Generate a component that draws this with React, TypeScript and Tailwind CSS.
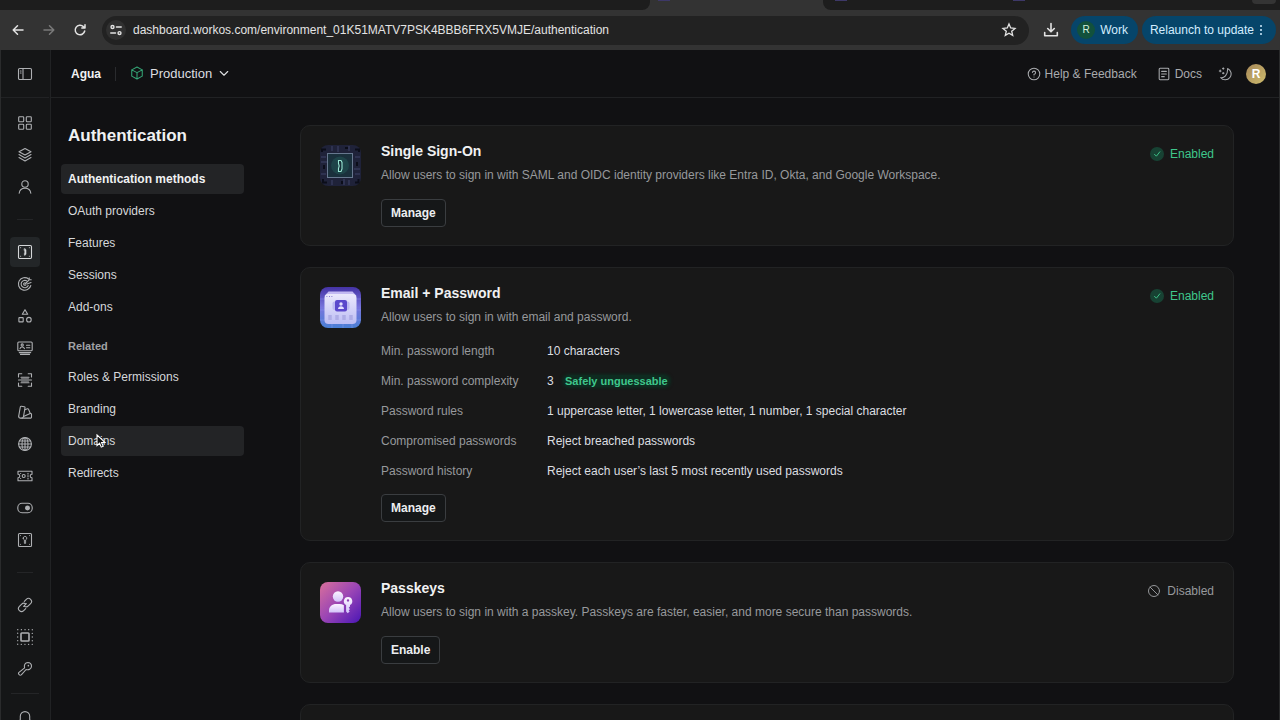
import type { ReactNode } from 'react'
import { clsx } from 'clsx'

function Glyph({ children, className = 'size-4', width = 1.1 }: { children: ReactNode; className?: string; width?: number }) {
  return (
    <svg viewBox="0 0 16 16" fill="none" stroke="currentColor" strokeWidth={width} strokeLinecap="round" strokeLinejoin="round" className={clsx('shrink-0', className)} aria-hidden="true">
      {children}
    </svg>
  )
}

const icons = {
  panel: <><rect x="1.5" y="2.5" width="13" height="11" rx="1.2" /><path d="M6 2.5v11M3.3 5h.8M3.3 7h.8" /></>,
  grid: <><rect x="1.7" y="1.7" width="5" height="5" rx=".8" /><rect x="9.3" y="1.7" width="5" height="5" rx=".8" /><rect x="1.7" y="9.3" width="5" height="5" rx=".8" /><rect x="9.3" y="9.3" width="5" height="5" rx=".8" /></>,
  layers: <><path d="M8 1.5 14 4.8 8 8 2 4.8Z" /><path d="m2 7.6 6 3.3 6-3.3M2 10.6l6 3.3 6-3.3" /></>,
  user: <><circle cx="8" cy="5" r="3.2" /><path d="M2.2 14.3c.4-3.3 2.7-5 5.8-5s5.4 1.7 5.8 5" /></>,
  auth: <><rect x="1.5" y="1.5" width="13" height="13" rx="1.2" /><path d="M7.4 4.8h.8l.8 1.2v4l-.8 1.2h-.8V9.3L8 8l-.6-1.3Z" fill="currentColor" strokeWidth=".6" /><path d="M3.6 3.7h.1M12.3 3.7h.1M3.6 12.3h.1M12.3 12.3h.1" strokeWidth=".9" /></>,
  radar: <><path d="M13.8 9.5A6.3 6.3 0 1 1 11.6 3" /><path d="M11.2 9.6A3.7 3.7 0 1 1 9.8 4.9" /><path d="M8.9 8.9A1.3 1.3 0 1 1 8 6.7" /><path d="m8 8 4.2-4.2V1.9M12.2 3.8h2M14 6.5 10 8" /></>,
  shapes: <><path d="m8 1.7 2.7 4.6H5.3Z" /><rect x="1.9" y="9.6" width="4.3" height="4.3" rx=".5" /><circle cx="11.9" cy="11.7" r="2.3" /></>,
  idCard: <><rect x=".8" y="2" width="14.4" height="8.8" rx="1" /><circle cx="5.2" cy="5" r="1.1" /><path d="M3 8.7C3.3 7.500 4 7 5.200 7s1.900.5 2.200 1.700M9.500 5.200h3.300M9.500 7.700h3.300M2.300 12.600h11.400M3.500 14.400h9" /></>,
  scan: <><path d="M1.5 5V1.700h3.300M11.200 1.700h3.300V5M14.500 11v3.300h-3.300M4.800 14.300H1.500V11" /><path d="M4 5.300h8M4 10.700h8M1.500 8h13" /><path d="M4.500 6.700h7M4.500 9.300h7" strokeWidth=".7" /></>,
  swatches: <><path d="M1.700 12.200 3.300 3c.1-.6.5-.9 1.100-.8l2.900.5c.6.1.8.5.7 1.100l-1.500 8.700" /><path d="M1.700 12.200c-.1 1 .5 1.800 1.500 1.900h10.400c.6 0 .9-.3.9-.9v-2.900c0-.5-.3-.8-.8-.8h-.5" /><path d="m8 5.700 2.400-.9c.5-.2.9 0 1.100.5l1.800 4.200M6.500 12.500l6.700-3M5 14.100c.9-.1 1.400-.7 1.500-1.600" /></>,
  globe: <><circle cx="8" cy="8" r="6.4" /><ellipse cx="8" cy="8" rx="3" ry="6.4" /><path d="M8 1.6v12.8M1.6 8h12.8M2.5 5h11M2.5 11h11" /></>,
  ticket: <><path d="M1 3.2h14v3a1.8 1.8 0 0 0 0 3.6v3H1v-3a1.8 1.8 0 0 0 0-3.6Z" /><circle cx="6.7" cy="8" r="1.5" /><path d="M11 5.2v.9M11 7.6v.9M11 10v.9M3.6 5.5h.1M3.6 10.5h.1" /></>,
  toggle: <><rect x=".8" y="3.3" width="14.4" height="9.4" rx="4.2" /><circle cx="10.5" cy="8" r="1.9" fill="currentColor" /></>,
  vault: <><rect x="1.5" y="1.5" width="13" height="13" rx="1" /><path d="M6.2 6.2A1.8 1.8 0 1 1 8.6 7.9v3.5H7.4V7.9a1.8 1.8 0 0 1-1.2-1.7Z" strokeWidth=".9" /><path d="M3.5 3.6h.1M12.4 3.6h.1M3.5 12.4h.1M12.4 12.4h.1" strokeWidth=".9" /></>,
  link: <><path d="m7.3 4.3 2-2a3 3 0 0 1 4.3 4.3l-2.3 2.3a3 3 0 0 1-3.9.3" /><path d="m8.7 11.7-2 2a3 3 0 0 1-4.3-4.3l2.3-2.3a3 3 0 0 1 3.9-.3M6.7 9.3l2.6-2.6" /></>,
  select: <><rect x="4" y="4" width="8" height="8" rx=".8" strokeWidth="1.6" /><path d="M.7.7h14.6v14.6H.7Z" strokeWidth="1.3" strokeDasharray=".1 3.55" /></>,
  key: <><path d="M7.6 6.9c-.8-2.5.3-5.3 3.3-5.4 2.2 0 3.7 1.5 3.6 3.7-.1 3-2.9 4.1-5.4 3.3l-4.800 5.400c-1.500 1-3.500-.8-2.600-2.300Z" /><path d="m11.3 4.700.1-.1" strokeWidth="1.500" /></>,
  bell: <><path d="M1.8 12.3h12.4l-1.5-2.8V6.300a4.700 4.700 0 0 0-9.400 0v3.200ZM6.300 14.300c.9 1 2.500 1 3.400 0" /></>,
}

type IconName = keyof typeof icons

const rail: { label: string; icon: IconName; active?: boolean }[][] = [
  [
    { label: 'Overview', icon: 'grid' },
    { label: 'Organizations', icon: 'layers' },
    { label: 'Users', icon: 'user' },
  ],
  [
    { label: 'Authentication', icon: 'auth', active: true },
    { label: 'Radar', icon: 'radar' },
    { label: 'Roles', icon: 'shapes' },
    { label: 'Directory Sync', icon: 'idCard' },
    { label: 'Audit Logs', icon: 'scan' },
    { label: 'Branding', icon: 'swatches' },
    { label: 'Domains', icon: 'globe' },
    { label: 'Entitlements', icon: 'ticket' },
    { label: 'Feature flags', icon: 'toggle' },
    { label: 'Vault', icon: 'vault' },
  ],
  [
    { label: 'Connections', icon: 'link' },
    { label: 'Widgets', icon: 'select' },
    { label: 'API Keys', icon: 'key' },
  ],
]

const mainLinks = ['Authentication methods', 'OAuth providers', 'Features', 'Sessions', 'Add-ons']
const relatedLinks = ['Roles & Permissions', 'Branding', 'Domains', 'Redirects']

const rules: [string, ReactNode][] = [
  ['Min. password length', '10 characters'],
  ['Min. password complexity', <>3 <span className="ml-1.5 rounded-full bg-[#0e2b20] px-0.5 text-[11px] font-semibold text-[#3fc78c] shadow-[0_0_3px_1px_#0e2b20]">Safely unguessable</span></>],
  ['Password rules', '1 uppercase letter, 1 lowercase letter, 1 number, 1 special character'],
  ['Compromised passwords', 'Reject breached passwords'],
  ['Password history', 'Reject each user’s last 5 most recently used passwords'],
]

function BrowserBar() {
  return (
    <div className="shrink-0 bg-[#333333]">
      <div className="flex h-2.5">
        <div className="w-[650px] rounded-br-lg bg-[#1d1d1d]" />
        <div className="flex w-[173px] pl-2"><span className="h-px w-3 bg-[#3d3868]" /></div>
        <div className="flex flex-1 rounded-bl-lg bg-[#1d1d1d] pr-1 pl-3">
          <span className="h-px w-3 bg-[#3d3868]" />
          <span className="ml-[166px] h-px w-3 bg-[#3d3868]" />
          <span className="ml-auto h-1 w-6 rounded-b-full bg-[#343434]" />
        </div>
      </div>
      <div className="flex h-10 items-center text-xs text-[#e3e3e3]">
        <div className="flex w-[102px] items-center gap-[15px] pl-2.5">
          <button aria-label="Back"><Glyph width={1.5}><path d="M13 8H3.2M7.5 3.8 3.2 8l4.3 4.2" /></Glyph></button>
          <button aria-label="Forward" className="text-[#7a7a7a]"><Glyph width={1.5}><path d="M3 8h9.8M8.5 3.8 12.8 8l-4.3 4.2" /></Glyph></button>
          <button aria-label="Reload"><Glyph width={1.5}><path d="M12.7 9a4.8 4.8 0 1 1-1.3-4.4L12.9 6M13 2.8V6H9.8" /></Glyph></button>
        </div>
        <div className="flex h-[29px] flex-1 items-center rounded-full bg-[#222222] pr-3 pl-1">
          <button aria-label="Site information" className="flex size-5 items-center justify-center rounded-full bg-[#303030]">
            <Glyph className="size-3.5" width={1.6}><circle cx="4" cy="4.5" r="1.7" /><path d="M8.5 4.5H14M2 11.5h5.500" /><circle cx="12" cy="11.5" r="1.7" /></Glyph>
          </button>
          <input aria-label="Address" readOnly value="dashboard.workos.com/environment_01K51MATV7PSK4BBB6FRX5VMJE/authentication" className="ml-[7px] min-w-0 flex-1 bg-transparent outline-none" />
          <button aria-label="Bookmark"><Glyph width={1.3}><path d="m8 2 1.7 4 4.3.4-3.3 2.8 1 4.2L8 11.2l-3.7 2.2 1-4.2L2 6.4 6.3 6Z" strokeLinejoin="miter" /></Glyph></button>
        </div>
        <button aria-label="Downloads" className="ml-3.5"><Glyph width={1.6}><path d="M8 1.5v8M4.7 6.5 8 9.8l3.3-3.300M1.700 10.500v3.300h12.600v-3.300" /></Glyph></button>
        <button className="ml-3 flex h-7 items-center gap-[5px] rounded-full bg-[#06456a] pr-2.5 pl-1.5 text-[#d3edff]">
          <span className="flex size-[18px] items-center justify-center rounded-full bg-[#12513c] text-[10px] text-[#d5f3df]">R</span>Work
        </button>
        <button className="mr-1 ml-1 flex h-7 items-center gap-1.5 rounded-full bg-[#06456a] pr-3.5 pl-2 text-[#d3edff]">
          Relaunch to update
          <span className="flex flex-col gap-0.5"><i className="size-0.5 rounded-full bg-current" /><i className="size-0.5 rounded-full bg-current" /><i className="size-0.5 rounded-full bg-current" /></span>
        </button>
      </div>
    </div>
  )
}

function IconRail() {
  return (
    <nav aria-label="Products" className="flex w-[51px] shrink-0 flex-col items-center border-r border-l border-r-[#212224] border-l-[#2a2b2c] bg-[#151617] pr-px text-[#aeb0b3]">
      <div className="flex h-12 w-full shrink-0 items-center justify-center border-b border-[#212224]">
        <button aria-label="Toggle sidebar"><Glyph>{icons.panel}</Glyph></button>
      </div>
      <div className="mt-[9px] flex flex-col items-center">
        {rail.map((group, i) => (
          <div key={i} className="flex flex-col items-center">
            {group.map((item) => (
              <a key={item.label} href="#" aria-label={item.label} className="flex h-8 items-center">
                <span className={clsx('flex size-[30px] items-center justify-center rounded-sm', item.active && 'bg-[#232628] text-[#d5d7d9]')}>
                  <Glyph>{icons[item.icon]}</Glyph>
                </span>
              </a>
            ))}
            <hr className={clsx('border-[#242527]', i === 2 ? 'my-2 w-7' : 'my-4 w-4')} />
          </div>
        ))}
        <a href="#" aria-label="Notifications" className="flex h-8 items-center"><Glyph>{icons.bell}</Glyph></a>
      </div>
    </nav>
  )
}

function TopBar() {
  return (
    <header className="flex h-12 shrink-0 items-center border-b border-[#212224] pr-[13px] pl-5 text-xs">
      <span className="font-semibold text-[#f0f1f2]">Agua</span>
      <span className="mx-3.5 h-3.5 w-px bg-[#2a2b2e]" />
      <button className="flex items-center text-[13px] text-[#dcdee0]">
        <Glyph className="size-3.5 text-[#35a777]" width={1.2}><path d="m8 1.2 6 3.2v7.2l-6 3.2-6-3.2V4.4ZM2 4.4l6 3.2 6-3.2M8 7.6v7.2" /></Glyph>
        <span className="ml-1.5">Production</span>
        <Glyph className="ml-1.5 size-3" width={1.5}><path d="m3 6 5 5 5-5" /></Glyph>
      </button>
      <div className="ml-auto flex items-center text-[#a9abae]">
        <a href="#" className="flex items-center gap-1">
          <Glyph className="size-3.5" width={1.2}><circle cx="8" cy="8" r="6.6" /><path d="M6.2 6.3A1.8 1.8 0 1 1 8 8.3v.9M8 11.4v.1" /></Glyph>
          Help &amp; Feedback
        </a>
        <a href="#" className="ml-5 flex items-center gap-1">
          <Glyph className="size-3.5" width={1.2}><rect x="2.5" y="1.5" width="11" height="13" rx="1" /><path d="M5.3 5h5.4M5.3 8h5.4M5.3 11h3" /></Glyph>
          Docs
        </a>
        <button aria-label="Theme" className="ml-4"><Glyph className="size-3.5" width={1.2}><path d="M11 1.7A6.8 6.8 0 1 1 3 12.3c3.800.9 8.300-3 8-10.600ZM2.500 3.500v2M1.500 4.500h2M6 1v1.600M5.200 1.800h1.600M6 6.200v1.600M5.200 7h1.600" /></Glyph></button>
        <button aria-label="Account" className="ml-3.5 flex size-5 items-center justify-center rounded-full bg-linear-to-br from-[#a8895a] to-[#cdbb6c] font-semibold text-white">R</button>
      </div>
    </header>
  )
}

function NavItem({ label, highlighted }: { label: string; highlighted?: 'current' | 'hover' }) {
  return (
    <a href="#" className={clsx('relative flex h-[30px] items-center rounded-sm px-[7px]', highlighted ? 'bg-[#232426]' : '', highlighted === 'current' ? 'font-semibold text-[#f0f1f2]' : 'text-[#d6d8da]')}>
      {label}
      {highlighted === 'hover' ? (
        <svg viewBox="0 0 12 18" className="absolute top-2 left-[34px] h-4 w-3" aria-hidden="true">
          <path d="M1.5 1v12l2.900-2.600 1.900 4.400 2.200-1-1.900-4.200h3.900Z" fill="#111" stroke="#fff" strokeWidth="1.2" />
        </svg>
      ) : null}
    </a>
  )
}

function SideNav() {
  return (
    <nav aria-label="Authentication" className="flex w-[183px] shrink-0 flex-col text-xs">
      <h1 className="mb-4 px-[7px] text-[17px] leading-6 font-semibold text-[#f0f1f2]">Authentication</h1>
      <div className="flex flex-col gap-0.5">
        {mainLinks.map((label, i) => <NavItem key={label} label={label} highlighted={i === 0 ? 'current' : undefined} />)}
      </div>
      <h2 className="mt-4 mb-2 px-[7px] text-[11px] leading-4 font-semibold text-[#a0a2a5]">Related</h2>
      <div className="flex flex-col gap-0.5">
        {relatedLinks.map((label) => <NavItem key={label} label={label} highlighted={label === 'Domains' ? 'hover' : undefined} />)}
      </div>
    </nav>
  )
}

function SsoArt() {
  return (
    <svg viewBox="0 0 41 41" className="size-[41px] shrink-0" aria-hidden="true">
      <rect width="41" height="41" rx="8" fill="#1f2239" />
      <path d="M1 12h5M1 17h6M1 29h5M35 12h5M34 24h6M35 29h5M12 1v5M18 1v6M29 1v5M12 35v5M24 34v6M29 35v5" stroke="#2e3250" strokeWidth="2" />
      <path d="M2 7V4.500h4M35 4.500h4V7M3 34v3.500h4M35 37.500h3.500V34M4 20v4M37 17v4M25 3h3M22 39v-3" stroke="#0b0d19" strokeWidth="2" fill="none" />
      <rect x="7.5" y="8.5" width="25" height="24" fill="#1a303c" stroke="#67788f" />
      <circle cx="20" cy="20.5" r="9" fill="#1f4a4c" opacity=".8" />
      <path d="M18.500 15.500h2.500l1 2v6.500l-1 2.500h-2.500v-3l.7-2.500-.7-2.500Z" fill="#173039" stroke="#9be8d5" strokeWidth="1.1" />
    </svg>
  )
}

function PasswordArt() {
  return (
    <svg viewBox="0 0 41 41" className="size-[41px] shrink-0" aria-hidden="true">
      <defs>
        <linearGradient id="pw-bg" x1="0" y1="0" x2="0" y2="1"><stop stopColor="#4533a5" /><stop offset=".5" stopColor="#7875dd" /><stop offset="1" stopColor="#4a7fd4" /></linearGradient>
        <linearGradient id="pw-box" x1="0" y1="0" x2="0" y2="1"><stop stopColor="#ebe9fc" /><stop offset="1" stopColor="#bdbdf4" /></linearGradient>
      </defs>
      <rect width="41" height="41" rx="8" fill="url(#pw-bg)" />
      <path d="M0 12h41M0 23h41M0 33h41M12 33v8M23 33v8M32 33v8" stroke="#8f9cf0" strokeWidth=".7" opacity=".6" />
      <path d="M8.500 4.500h24L36.500 9h-32Z" fill="#c3baf2" />
      <rect x="4.5" y="7" width="32" height="30" rx="4" fill="url(#pw-box)" />
      <path d="M6.500 9.500h.8M9 9.500h.8M11.500 9.500h.8" stroke="#7467c8" />
      <rect x="12.5" y="14.500" width="17" height="8.500" rx="2" fill="#bdb9f2" />
      <rect x="15" y="13" width="12" height="11.5" rx="2" fill="#5b48cc" />
      <circle cx="21" cy="17" r="1.7" fill="#e4e0ff" /><path d="M18 22c.2-1.9 1.200-2.700 3-2.700s2.800.8 3 2.700Z" fill="#e4e0ff" />
      <path d="M10 28v5M17 28v5M24 28v5M31 28v5" stroke="#aeade6" strokeWidth="3.500" />
    </svg>
  )
}

function PasskeyArt() {
  return (
    <svg viewBox="0 0 41 41" className="size-[41px] shrink-0" aria-hidden="true">
      <defs>
        <linearGradient id="pk-bg" x1="0" y1="0" x2="1" y2="1"><stop stopColor="#d9709b" /><stop offset=".5" stopColor="#9a45b5" /><stop offset="1" stopColor="#4a16b5" /></linearGradient>
        <linearGradient id="pk-fg" x1="0" y1="0" x2="0" y2="1"><stop stopColor="#fbf4ff" /><stop offset="1" stopColor="#d3c4fa" /></linearGradient>
      </defs>
      <rect width="41" height="41" rx="8" fill="url(#pk-bg)" />
      <g fill="url(#pk-fg)">
        <circle cx="18" cy="14.5" r="5.2" />
        <path d="M9 30.500v-2c0-4 3.200-6.500 7.200-6.500h3.500c1.600 0 3 .4 4.200 1.200v7.300Z" />
        <path fillRule="evenodd" d="M28 15a4.300 4.300 0 0 1 2 8.100v1.400l-1.300 1.300 1.300 1.300-1.300 1.300 1 1-2 1.800-1.600-1.600v-6.500A4.300 4.300 0 0 1 28 15Zm0 2.200a1.200 1.200 0 1 0 0 2.400 1.200 1.200 0 0 0 0-2.400Z" />
      </g>
    </svg>
  )
}

function MethodCard({ art, title, description, enabled, children }: { art: ReactNode; title: string; description: string; enabled?: boolean; children?: ReactNode }) {
  return (
    <section className="flex shrink-0 items-start rounded-[10px] border border-[#222324] bg-[#181818] px-[19px] pt-[19px] pb-[18px]">
      {art}
      <div className="ml-5 min-w-0 flex-1">
        <h3 className="text-sm leading-3 font-semibold text-[#f0f1f2]">{title}</h3>
        <p className="mt-2 text-xs leading-5 text-[#97999c]">{description}</p>
        {children}
        <button className="mt-3.5 h-7 rounded border border-[#3a3d40] bg-[#151718] px-[9px] text-xs font-semibold text-[#eceef0]">{enabled ? 'Manage' : 'Enable'}</button>
      </div>
      <div className={clsx('flex items-center gap-1.5 text-xs leading-[18px]', enabled ? 'text-[#3fc78c]' : 'text-[#97999c]')}>
        {enabled ? (
          <span className="flex size-3.5 items-center justify-center rounded-full bg-[#174233]"><Glyph className="size-2.5" width={1.5}><path d="m4 8.500 3 3 5.500-7" /></Glyph></span>
        ) : (
          <Glyph className="size-3.5"><circle cx="8" cy="8" r="6.3" /><path d="m3.5 3.5 9 9" /></Glyph>
        )}
        {enabled ? 'Enabled' : 'Disabled'}
      </div>
    </section>
  )
}

export default function App() {
  return (
    <div className="flex h-screen flex-col overflow-hidden bg-[#111113] font-['Liberation_Sans',sans-serif]">
      <BrowserBar />
      <div className="flex min-h-0 flex-1 border-r border-[#2a2b2c]">
        <IconRail />
        <div className="flex min-w-0 flex-1 flex-col">
          <TopBar />
          <div className="flex min-h-0 flex-1 overflow-hidden pr-[45px] pl-2.5">
            <div className="pt-[26px]"><SideNav /></div>
            <main className="ml-14 flex min-w-0 flex-1 flex-col gap-[21px] pt-[27px]">
              <MethodCard enabled art={<SsoArt />} title="Single Sign-On" description="Allow users to sign in with SAML and OIDC identity providers like Entra ID, Okta, and Google Workspace." />
              <MethodCard enabled art={<PasswordArt />} title="Email + Password" description="Allow users to sign in with email and password.">
                <dl className="mt-[9px] -mb-1.5 text-xs">
                  {rules.map(([label, value]) => (
                    <div key={label} className="flex h-[30px] items-center">
                      <dt className="w-[166px] text-[#97999c]">{label}</dt>
                      <dd className="text-[#dcdee0]">{value}</dd>
                    </div>
                  ))}
                </dl>
              </MethodCard>
              <MethodCard art={<PasskeyArt />} title="Passkeys" description="Allow users to sign in with a passkey. Passkeys are faster, easier, and more secure than passwords." />
              <section className="h-32 shrink-0 rounded-[10px] border border-[#222324] bg-[#181818]" />
            </main>
          </div>
        </div>
      </div>
    </div>
  )
}
